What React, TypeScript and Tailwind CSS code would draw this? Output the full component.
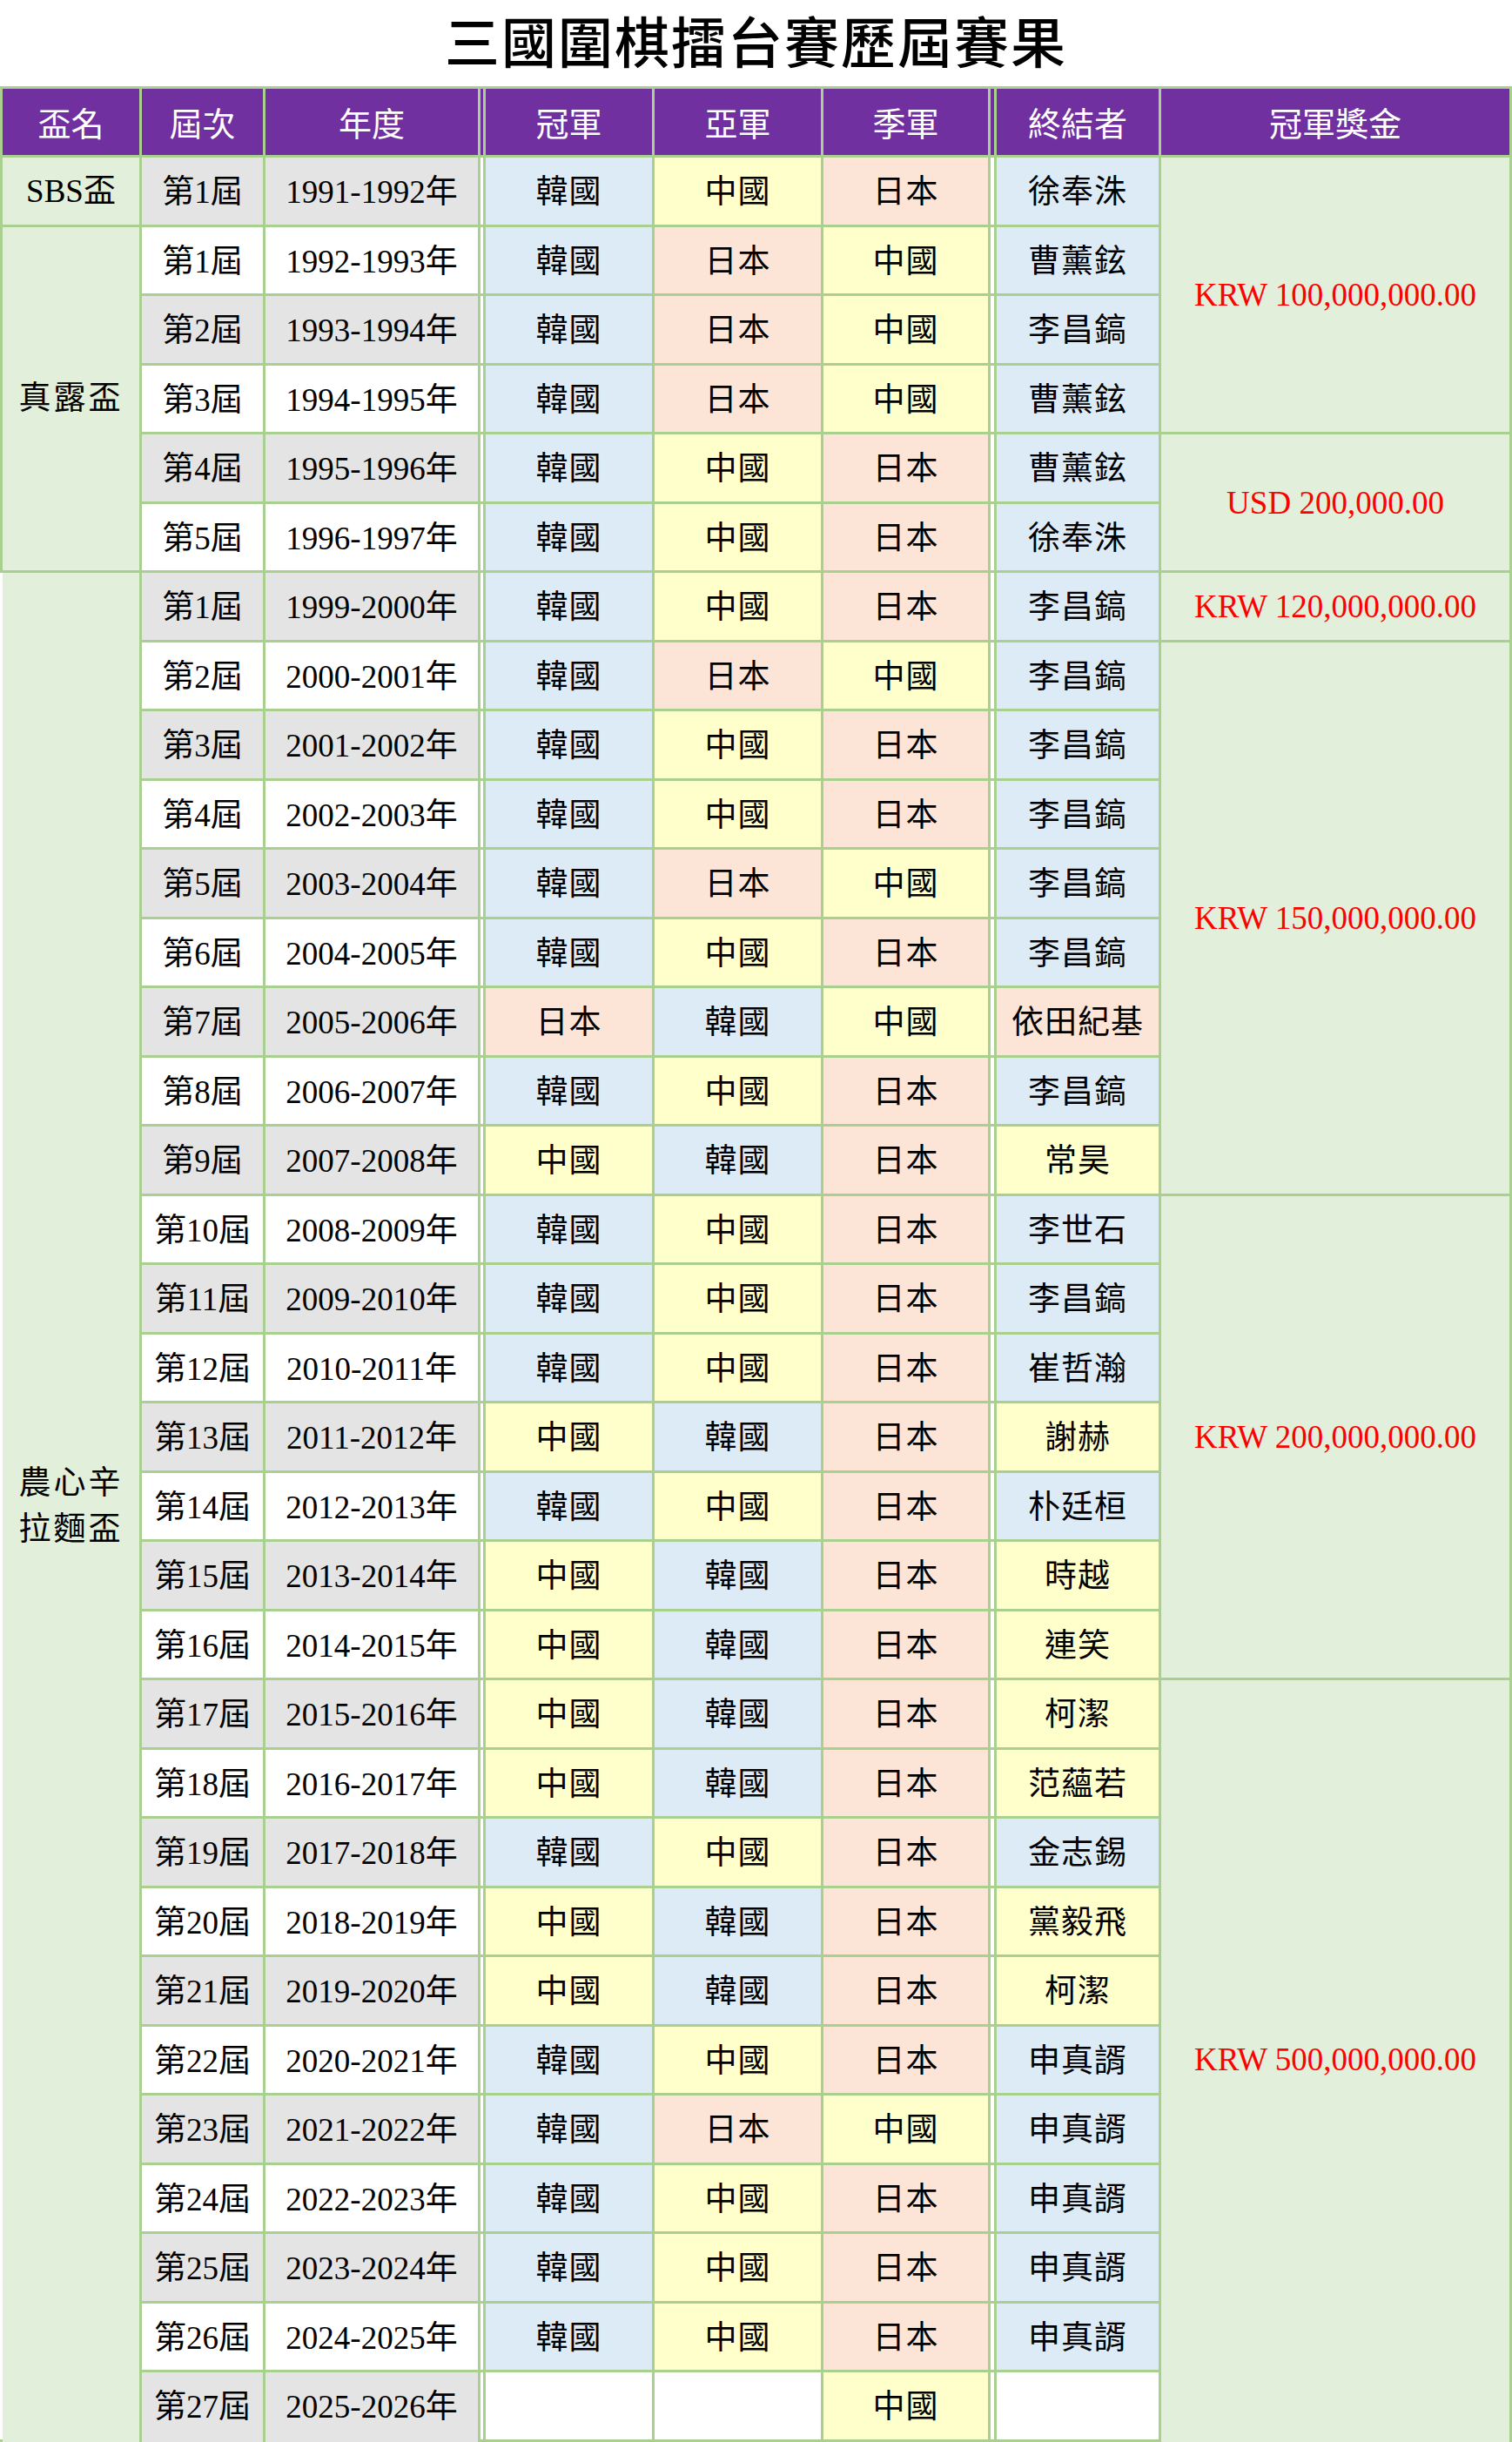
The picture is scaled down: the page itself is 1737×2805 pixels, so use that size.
type Country = '韓國' | '中國' | '日本' | ''

type Row = {
  cup?: { label: string[]; span: number; spaced?: boolean }
  no: string
  year: string
  result: [Country, Country, Country]
  winner: string
  prize?: { text: string; span: number }
}

const COUNTRY_BG: Record<string, string> = {
  韓國: 'bg-[#DDEBF7]',
  中國: 'bg-[#FFFFCC]',
  日本: 'bg-[#FCE4D6]',
  '': 'bg-white',
}

const ROWS: Row[] = [
  { cup: { label: ['SBS盃'], span: 1 }, no: '第1屆', year: '1991-1992年', result: ['韓國', '中國', '日本'], winner: '徐奉洙', prize: { text: 'KRW 100,000,000.00', span: 4 } },
  { cup: { label: ['真露盃'], span: 5, spaced: true }, no: '第1屆', year: '1992-1993年', result: ['韓國', '日本', '中國'], winner: '曹薰鉉' },
  { no: '第2屆', year: '1993-1994年', result: ['韓國', '日本', '中國'], winner: '李昌鎬' },
  { no: '第3屆', year: '1994-1995年', result: ['韓國', '日本', '中國'], winner: '曹薰鉉' },
  { no: '第4屆', year: '1995-1996年', result: ['韓國', '中國', '日本'], winner: '曹薰鉉', prize: { text: 'USD 200,000.00', span: 2 } },
  { no: '第5屆', year: '1996-1997年', result: ['韓國', '中國', '日本'], winner: '徐奉洙' },
  { cup: { label: ['農心辛', '拉麵盃'], span: 27, spaced: true }, no: '第1屆', year: '1999-2000年', result: ['韓國', '中國', '日本'], winner: '李昌鎬', prize: { text: 'KRW 120,000,000.00', span: 1 } },
  { no: '第2屆', year: '2000-2001年', result: ['韓國', '日本', '中國'], winner: '李昌鎬', prize: { text: 'KRW 150,000,000.00', span: 8 } },
  { no: '第3屆', year: '2001-2002年', result: ['韓國', '中國', '日本'], winner: '李昌鎬' },
  { no: '第4屆', year: '2002-2003年', result: ['韓國', '中國', '日本'], winner: '李昌鎬' },
  { no: '第5屆', year: '2003-2004年', result: ['韓國', '日本', '中國'], winner: '李昌鎬' },
  { no: '第6屆', year: '2004-2005年', result: ['韓國', '中國', '日本'], winner: '李昌鎬' },
  { no: '第7屆', year: '2005-2006年', result: ['日本', '韓國', '中國'], winner: '依田紀基' },
  { no: '第8屆', year: '2006-2007年', result: ['韓國', '中國', '日本'], winner: '李昌鎬' },
  { no: '第9屆', year: '2007-2008年', result: ['中國', '韓國', '日本'], winner: '常昊' },
  { no: '第10屆', year: '2008-2009年', result: ['韓國', '中國', '日本'], winner: '李世石', prize: { text: 'KRW 200,000,000.00', span: 7 } },
  { no: '第11屆', year: '2009-2010年', result: ['韓國', '中國', '日本'], winner: '李昌鎬' },
  { no: '第12屆', year: '2010-2011年', result: ['韓國', '中國', '日本'], winner: '崔哲瀚' },
  { no: '第13屆', year: '2011-2012年', result: ['中國', '韓國', '日本'], winner: '謝赫' },
  { no: '第14屆', year: '2012-2013年', result: ['韓國', '中國', '日本'], winner: '朴廷桓' },
  { no: '第15屆', year: '2013-2014年', result: ['中國', '韓國', '日本'], winner: '時越' },
  { no: '第16屆', year: '2014-2015年', result: ['中國', '韓國', '日本'], winner: '連笑' },
  { no: '第17屆', year: '2015-2016年', result: ['中國', '韓國', '日本'], winner: '柯潔', prize: { text: 'KRW 500,000,000.00', span: 11 } },
  { no: '第18屆', year: '2016-2017年', result: ['中國', '韓國', '日本'], winner: '范蘊若' },
  { no: '第19屆', year: '2017-2018年', result: ['韓國', '中國', '日本'], winner: '金志錫' },
  { no: '第20屆', year: '2018-2019年', result: ['中國', '韓國', '日本'], winner: '黨毅飛' },
  { no: '第21屆', year: '2019-2020年', result: ['中國', '韓國', '日本'], winner: '柯潔' },
  { no: '第22屆', year: '2020-2021年', result: ['韓國', '中國', '日本'], winner: '申真諝' },
  { no: '第23屆', year: '2021-2022年', result: ['韓國', '日本', '中國'], winner: '申真諝' },
  { no: '第24屆', year: '2022-2023年', result: ['韓國', '中國', '日本'], winner: '申真諝' },
  { no: '第25屆', year: '2023-2024年', result: ['韓國', '中國', '日本'], winner: '申真諝' },
  { no: '第26屆', year: '2024-2025年', result: ['韓國', '中國', '日本'], winner: '申真諝' },
  { no: '第27屆', year: '2025-2026年', result: ['', '', '中國'], winner: '' },
]

const HEADERS = ['盃名', '屆次', '年度', null, '冠軍', '亞軍', '季軍', null, '終結者', '冠軍獎金']

export default function App() {
  const last = ROWS.length - 1

  return (
    <div className="h-[2805px] w-[1737px] overflow-hidden bg-white">
      <h1 className="flex h-[99px] items-center justify-center pb-[10px] font-['Noto_Sans_CJK_TC',sans-serif] text-[63px] leading-none font-medium text-black tracking-[2px]">
        三國圍棋擂台賽歷屆賽果
      </h1>

      <table className="w-[1737px] table-fixed border-separate border-spacing-[3px] bg-[#A9D08E] font-['Liberation_Serif','Noto_Sans_CJK_TC',serif] text-[37px] leading-none text-black">
        <colgroup>
          <col className="w-[157px]" />
          <col className="w-[139px]" />
          <col className="w-[244px]" />
          <col className="w-[3px]" />
          <col className="w-[191px]" />
          <col className="w-[191px]" />
          <col className="w-[189px]" />
          <col className="w-[4px]" />
          <col className="w-[186px]" />
          <col className="w-[400px]" />
        </colgroup>
        <thead>
          <tr>
            {HEADERS.map((h, i) => (
              <th
                key={i}
                className="h-[76px] bg-[#7030A0] p-0 text-center align-middle font-['Noto_Sans_CJK_TC',serif] text-[38px] font-normal text-white"
              >
                {h}
              </th>
            ))}
          </tr>
        </thead>
        <tbody>
          {ROWS.map((r, i) => {
            const stripe = i % 2 === 0 ? 'bg-[#E4E4E4]' : 'bg-white'
            const tail = i === last
            return (
              <tr key={i}>
                {r.cup && (
                  <td
                    rowSpan={r.cup.span}
                    className={`p-0 text-center align-middle bg-[#E2EFDA] leading-[53px] ${
                      r.cup.spaced ? 'tracking-[3px]' : ''
                    } ${r.cup.span === 27 ? 'shadow-[-3px_0_0_#fff,0_3px_0_#E2EFDA]' : ''}`}
                  >
                    {r.cup.label.map((l, k) => (
                      <div key={k}>{l}</div>
                    ))}
                  </td>
                )}
                <td className={`h-[76.5px] p-0 pt-[3px] text-center align-middle ${stripe} ${tail ? 'shadow-[0_3px_0_#E4E4E4]' : ''}`}>
                  {r.no}
                </td>
                <td className={`p-0 pt-[3px] text-center align-middle ${stripe} ${tail ? 'shadow-[0_3px_0_#E4E4E4]' : ''}`}>
                  {r.year}
                </td>
                <td className="bg-white p-0" />
                {r.result.map((c, k) => (
                  <td key={k} className={`p-0 pt-[3px] text-center align-middle tracking-[1px] ${COUNTRY_BG[c]}`}>
                    {c}
                  </td>
                ))}
                <td className="bg-white p-0" />
                <td className={`p-0 pt-[3px] text-center align-middle tracking-[1px] ${COUNTRY_BG[r.result[0]]}`}>
                  {r.winner}
                </td>
                {r.prize && (
                  <td
                    rowSpan={r.prize.span}
                    className={`bg-[#E2EFDA] p-0 text-center align-middle text-[#FF0000] ${
                      r.prize.span === 11 ? 'shadow-[0_3px_0_#E2EFDA]' : ''
                    }`}
                  >
                    {r.prize.text}
                  </td>
                )}
              </tr>
            )
          })}
        </tbody>
      </table>
    </div>
  )
}
